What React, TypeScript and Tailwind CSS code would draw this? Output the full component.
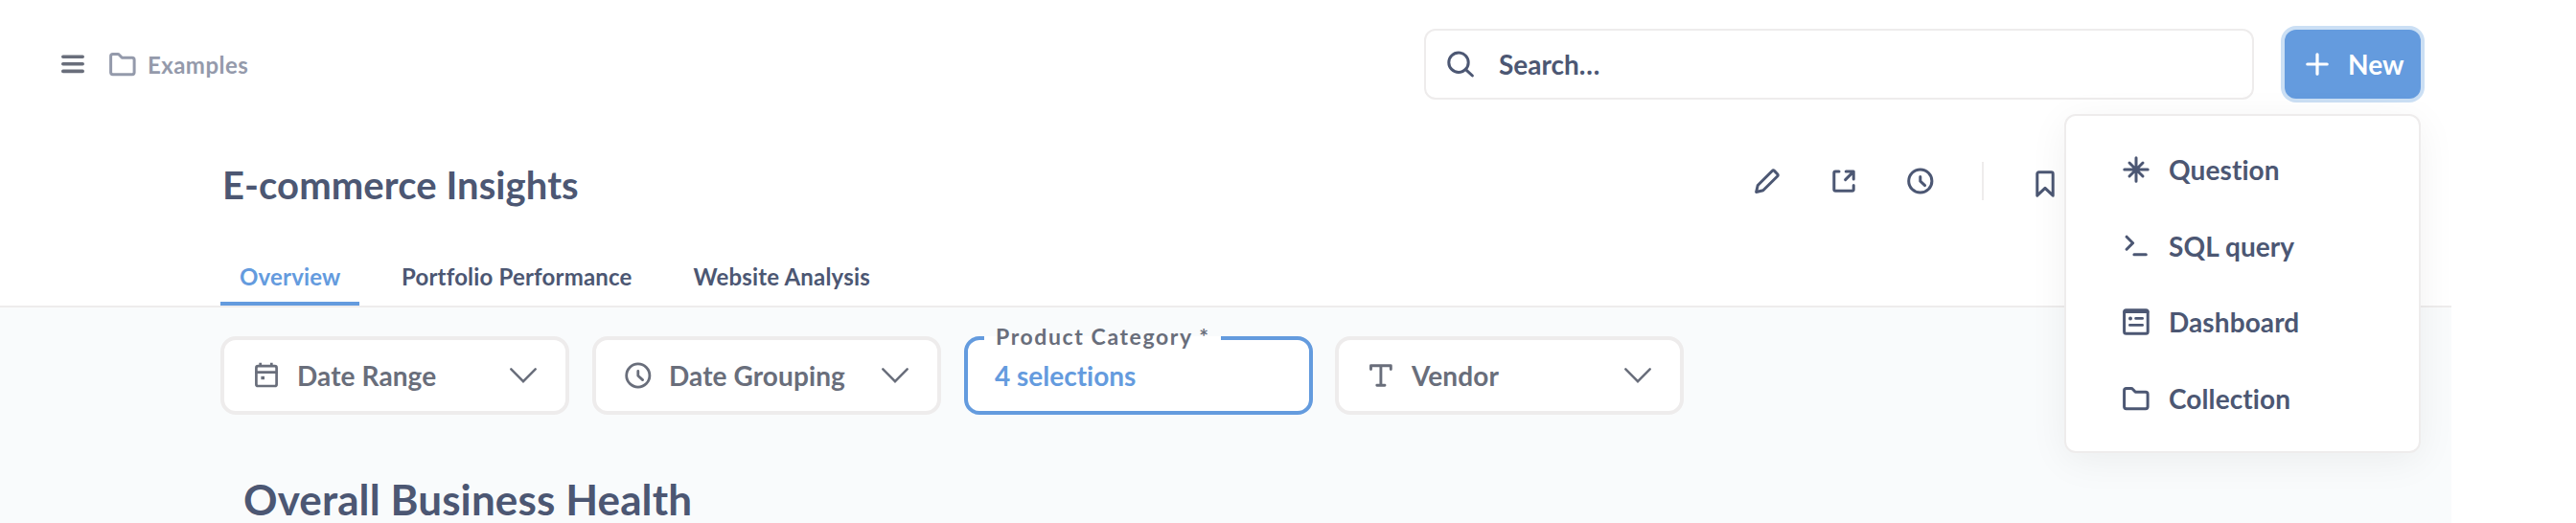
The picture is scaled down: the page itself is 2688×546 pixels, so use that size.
import type { ReactNode } from "react";

function Icon({ children, className = "", width = 3 }: { children: ReactNode; className?: string; width?: number }) {
  return (
    <svg
      viewBox="0 0 32 32"
      className={`size-8 shrink-0 ${className}`}
      fill="none"
      stroke="currentColor"
      strokeWidth={width}
      strokeLinecap="round"
      strokeLinejoin="round"
      aria-hidden="true"
    >
      {children}
    </svg>
  );
}

const MenuIcon = () => (
  <Icon className="text-[#696e7b]" width={3.6}>
    <path d="M5.8 8.2H26.2M5.8 15.8H26.2M5.8 23.4H26.2" />
  </Icon>
);

const FolderIcon = ({ className = "" }: { className?: string }) => (
  <Icon className={className}>
    <path d="M5.8 5.5H10.9a2 2 0 0 1 1.5.7L15.3 9.3H25.9a2.2 2.2 0 0 1 2.2 2.2V24.6a2.2 2.2 0 0 1-2.2 2.2H5.8a2.2 2.2 0 0 1-2.2-2.2V7.7A2.2 2.2 0 0 1 5.8 5.5Z" />
  </Icon>
);

const SearchIcon = () => (
  <Icon>
    <circle cx="14" cy="14.2" r="10.2" />
    <path d="M21.5 21.6L28.4 28" />
  </Icon>
);

const PlusIcon = () => (
  <Icon width={3.2}>
    <path d="M16 5.8V26.2M5.8 16H26.2" />
  </Icon>
);

const PencilIcon = () => (
  <Icon>
    <path d="M4.6 27.5L6.2 20.5L21.2 5.5Q22.4 4.4 23.5 5.4L26.7 8.7Q27.7 9.9 26.7 11L11.8 25.7Z" />
  </Icon>
);

const ExternalIcon = () => (
  <Icon>
    <path d="M11 5.9H7.3a1.5 1.5 0 0 0-1.5 1.5V24.7a1.5 1.5 0 0 0 1.5 1.5H24.7a1.5 1.5 0 0 0 1.5-1.5V20.6M18.2 5.9H26.2V14M17.6 14.6L25.6 6.6" />
  </Icon>
);

const ClockIcon = ({ width = 3 }: { width?: number }) => (
  <Icon width={width}>
    <circle cx="15.8" cy="16" r="12.1" />
    <path d="M15.8 11.4V16.2L20.6 20.6" />
  </Icon>
);

const BookmarkIcon = () => (
  <Icon>
    <path d="M7.8 28.2V5.5a1.7 1.7 0 0 1 1.7-1.7H22.5a1.7 1.7 0 0 1 1.7 1.7V28.2L16 20.4Z" />
  </Icon>
);

const InsightIcon = () => (
  <Icon>
    <path d="M16 3.8V28.2M3.8 16H28.2M9 9L23 23M23 9L9 23" />
  </Icon>
);

const SqlIcon = () => (
  <Icon>
    <path d="M6.1 6.2L12.6 12.7L6.1 19.2M13.9 24.8H26.3" />
  </Icon>
);

const DashboardIcon = () => (
  <Icon>
    <rect x="3.6" y="3.8" width="24.6" height="24.4" rx="2" />
    <path d="M4 5.4H28" />
    <circle cx="10" cy="12.4" r="2" fill="currentColor" stroke="none" />
    <path d="M15.6 12.4H22.6M9.4 19.4H22.6" strokeWidth="2.8" />
  </Icon>
);

const CalendarIcon = () => (
  <Icon width={2.7}>
    <rect x="5.4" y="6.2" width="21.2" height="20.8" rx="1.8" />
    <path d="M5.4 12.7H26.6" />
    <path d="M9.7 2.7V6M21.3 2.7V6" strokeLinecap="butt" />
    <rect x="10.4" y="16.8" width="3.6" height="3.4" fill="currentColor" stroke="none" />
  </Icon>
);

const StringIcon = () => (
  <Icon width={2.9}>
    <path d="M5.5 9.6V5.8H26.3V9.6M15.9 5.8V26.2M11.8 26.2H20" />
  </Icon>
);

const ChevronIcon = () => (
  <Icon width={2.5} className="ml-auto">
    <path d="M3.3 9.4L16 22.2L28.7 9.4" strokeLinejoin="miter" />
  </Icon>
);

function FilterBox({ icon, label, className = "" }: { icon: ReactNode; label: string; className?: string }) {
  return (
    <button
      className={`flex h-[82px] w-[364px] items-center rounded-2xl border-4 border-[#eeecec] bg-white pr-7 pl-7 text-[28px] leading-9 font-bold tracking-[0.1px] text-[#696e7b] ${className}`}
    >
      {icon}
      <span className="ml-4">{label}</span>
      <ChevronIcon />
    </button>
  );
}

function MenuRow({ icon, label }: { icon: ReactNode; label: string }) {
  return (
    <li className="flex h-[79.7px] items-center gap-[18px] pl-[57px]">
      {icon}
      <span>{label}</span>
    </li>
  );
}

export default function App() {
  return (
    <div className="h-[546px] w-full overflow-hidden bg-white font-['Lato',sans-serif] font-bold text-[#4c5773] [font-variant-ligatures:none]">
      <div className="relative flex h-full w-[2558px] flex-col overflow-hidden">
        <header className="flex h-[134px] shrink-0 items-center pr-8 pl-[60px]">
          <MenuIcon />
          <div className="ml-5 flex items-center text-[#949aab]">
            <FolderIcon />
            <span className="ml-[10px] pt-0.5 text-[24px] leading-8 tracking-[0.45px]">Examples</span>
          </div>
          <div className="ml-auto flex h-[74px] w-[866px] items-center gap-6 rounded-xl border-2 border-[#eeecec] pl-5 text-[28px] leading-9">
            <SearchIcon />
            <span>Search…</span>
          </div>
          <button className="ml-8 flex h-[72px] w-[142px] items-center gap-4 rounded-xl bg-[#649bde] pl-[18px] text-[28px] leading-9 text-white ring-4 ring-[#cbdff4]">
            <PlusIcon />
            <span>New</span>
          </button>
        </header>

        <div className="flex h-[119px] shrink-0 pl-[232px]">
          <h1 className="pt-[35px] text-[40px] leading-[48px] tracking-[0.08px]">E-commerce Insights</h1>
          <div className="mt-[35px] ml-auto flex h-10 items-center pr-[408px]">
            <PencilIcon />
            <span className="ml-12 flex"><ExternalIcon /></span>
            <span className="ml-12 flex"><ClockIcon /></span>
            <span className="ml-12 h-10 w-[2px] shrink-0 bg-[#eeecec]" />
            <span className="mt-1.5 ml-12 flex"><BookmarkIcon /></span>
          </div>
        </div>

        <nav className="flex h-[68px] shrink-0 gap-6 border-b-2 border-[#eeecec] pl-[230px] text-[24px] leading-8 tracking-[0.18px]">
          <a className="flex h-[66px] w-[145px] items-start border-b-4 border-[#649bde] px-5 pt-5 text-[#649bde]">Overview</a>
          <a className="px-5 pt-5">Portfolio Performance</a>
          <a className="px-5 pt-5">Website Analysis</a>
        </nav>

        <main className="flex-1 bg-[#f9fbfc] pt-[30px] pl-[230px]">
          <div className="flex gap-6">
            <FilterBox icon={<CalendarIcon />} label="Date Range" />
            <FilterBox icon={<ClockIcon width={2.8} />} label="Date Grouping" />
            <div className="relative flex h-[82px] w-[364px] items-center rounded-2xl border-4 border-[#649bde] bg-white pl-7 text-[28px] leading-9 text-[#649bde]">
              <span>4 selections</span>
              <span className="absolute -top-1 left-[17px] flex h-4 w-[247px] items-center bg-white pl-3 text-[23px] tracking-[1.6px] whitespace-nowrap text-[#696e7b]">
                <span className="-mt-4">Product Category *</span>
              </span>
            </div>
            <FilterBox icon={<StringIcon />} label="Vendor" className="-ml-px" />
          </div>
          <h2 className="mt-[63px] pl-6 text-[44px] leading-[50px] tracking-[0.12px]">Overall Business Health</h2>
        </main>

        <ul className="absolute top-[119px] right-8 h-[354px] w-[372px] rounded-xl border-2 border-[#eeecec] bg-white py-4 text-[28px] leading-9 tracking-[0.1px] shadow-[0_8px_40px_rgba(0,0,0,0.06)]">
          <MenuRow icon={<InsightIcon />} label="Question" />
          <MenuRow icon={<SqlIcon />} label="SQL query" />
          <MenuRow icon={<DashboardIcon />} label="Dashboard" />
          <MenuRow icon={<FolderIcon />} label="Collection" />
        </ul>
      </div>
    </div>
  );
}
